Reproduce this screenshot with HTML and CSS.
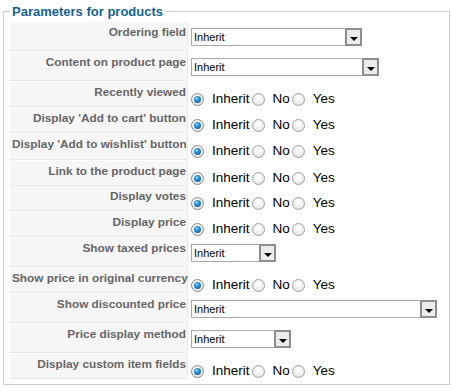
FILE: index.html
```html
<!DOCTYPE html>
<html>
  <head>
    <title>Parameters for products</title>
    <link rel="stylesheet" href="styles.css">
  </head>
  <body>
    <fieldset class="params">
      <legend>Parameters for products</legend>

      <div class="row row-select">
        <div class="key">Ordering field</div>
        <div class="val">
          <div class="select sel-ordering"><span class="select-text">Inherit</span><span class="select-btn"><span class="arrow"></span></span></div>
        </div>
      </div>

      <div class="row row-select">
        <div class="key">Content on product page</div>
        <div class="val">
          <div class="select sel-content"><span class="select-text">Inherit</span><span class="select-btn"><span class="arrow"></span></span></div>
        </div>
      </div>

      <div class="row row-radio">
        <div class="key">Recently viewed</div>
        <div class="val">
          <span class="radio on"></span><span class="opt">Inherit</span>
          <span class="radio"></span><span class="opt">No</span>
          <span class="radio"></span><span class="opt">Yes</span>
        </div>
      </div>

      <div class="row row-radio">
        <div class="key">Display 'Add to cart' button</div>
        <div class="val">
          <span class="radio on"></span><span class="opt">Inherit</span>
          <span class="radio"></span><span class="opt">No</span>
          <span class="radio"></span><span class="opt">Yes</span>
        </div>
      </div>

      <div class="row row-radio row-tall">
        <div class="key">Display 'Add to wishlist' button</div>
        <div class="val">
          <span class="radio on"></span><span class="opt">Inherit</span>
          <span class="radio"></span><span class="opt">No</span>
          <span class="radio"></span><span class="opt">Yes</span>
        </div>
      </div>

      <div class="row row-radio row-short">
        <div class="key">Link to the product page</div>
        <div class="val">
          <span class="radio on"></span><span class="opt">Inherit</span>
          <span class="radio"></span><span class="opt">No</span>
          <span class="radio"></span><span class="opt">Yes</span>
        </div>
      </div>

      <div class="row row-radio">
        <div class="key">Display votes</div>
        <div class="val">
          <span class="radio on"></span><span class="opt">Inherit</span>
          <span class="radio"></span><span class="opt">No</span>
          <span class="radio"></span><span class="opt">Yes</span>
        </div>
      </div>

      <div class="row row-radio">
        <div class="key">Display price</div>
        <div class="val">
          <span class="radio on"></span><span class="opt">Inherit</span>
          <span class="radio"></span><span class="opt">No</span>
          <span class="radio"></span><span class="opt">Yes</span>
        </div>
      </div>

      <div class="row row-select">
        <div class="key">Show taxed prices</div>
        <div class="val">
          <div class="select sel-taxed"><span class="select-text">Inherit</span><span class="select-btn"><span class="arrow"></span></span></div>
        </div>
      </div>

      <div class="row row-radio">
        <div class="key">Show price in original currency</div>
        <div class="val">
          <span class="radio on"></span><span class="opt">Inherit</span>
          <span class="radio"></span><span class="opt">No</span>
          <span class="radio"></span><span class="opt">Yes</span>
        </div>
      </div>

      <div class="row row-select">
        <div class="key">Show discounted price</div>
        <div class="val">
          <div class="select sel-discount"><span class="select-text">Inherit</span><span class="select-btn"><span class="arrow"></span></span></div>
        </div>
      </div>

      <div class="row row-select">
        <div class="key">Price display method</div>
        <div class="val">
          <div class="select sel-method"><span class="select-text">Inherit</span><span class="select-btn"><span class="arrow"></span></span></div>
        </div>
      </div>

      <div class="row row-radio">
        <div class="key">Display custom item fields</div>
        <div class="val">
          <span class="radio on"></span><span class="opt">Inherit</span>
          <span class="radio"></span><span class="opt">No</span>
          <span class="radio"></span><span class="opt">Yes</span>
        </div>
      </div>
    </fieldset>
  </body>
</html>
```

FILE: styles.css
```css
body {
  margin: 0;
  padding-top: 4px;
  background: #fff;
  font-family: "Liberation Sans", Arial, sans-serif;
}

.params {
  margin: 0 2px 0 3px;
  padding: 3px 6px 4px 6px;
  border: 1px solid #cccccc;
}

.params legend {
  padding: 0 2px;
  font-size: 13px;
  line-height: 15px;
  font-weight: bold;
  color: #146295;
}

.row {
  display: grid;
  grid-template-columns: 178px 1fr;
  column-gap: 2px;
  margin-bottom: 1px;
}

.row-select {
  height: 29px;
}

.row-radio {
  height: 25px;
}

.row-tall {
  height: 26px;
}

.row-short {
  height: 24px;
}

.key {
  box-sizing: border-box;
  padding: 3px 1px 0 2px;
  background: #f6f6f6;
  border-bottom: 1px solid #e9e9e9;
  border-right: 1px solid #e9e9e9;
  text-align: right;
  font-size: 11.8px;
  line-height: 14px;
  font-weight: bold;
  color: #666666;
  white-space: nowrap;
}

.val {
  display: flex;
  align-items: center;
  align-self: start;
  padding-left: 1px;
}

.row-select .val {
  padding-top: 6px;
}

.row-radio .val {
  padding-top: 9px;
}

/* fake select boxes */
.select {
  box-sizing: border-box;
  display: flex;
  align-items: center;
  height: 18px;
  border: 1px solid #a9a9a9;
  background: #fff;
}

.select-text {
  padding-left: 2px;
  font-size: 11px;
  color: #000;
}

.select-btn {
  box-sizing: border-box;
  display: flex;
  align-items: center;
  justify-content: center;
  width: 17px;
  height: 18px;
  margin: -1px -1px -1px auto;
  border: 2px solid #8e8e8e;
  background: #ececec;
}

.arrow {
  width: 0;
  height: 0;
  margin-top: 3px;
  border-left: 4px solid transparent;
  border-right: 4px solid transparent;
  border-top: 4px solid #000;
}

.sel-ordering { width: 171px; }
.sel-content { width: 188px; }
.sel-taxed { width: 85px; }
.sel-discount { width: 246px; }
.sel-method { width: 100px; }

/* radios */
.radio {
  position: relative;
  box-sizing: border-box;
  flex: none;
  width: 13px;
  height: 13px;
  border: 1px solid #a4a4a4;
  border-radius: 50%;
  background: radial-gradient(circle at 50% 40%, #ffffff 0, #f0f0f0 50%, #d6d6d6 100%);
}

.radio.on {
  border-color: #8a8a8a;
}

.radio.on::after {
  content: "";
  position: absolute;
  left: 2px;
  top: 2px;
  width: 7px;
  height: 7px;
  border-radius: 50%;
  background: radial-gradient(circle at 40% 35%, #a6ddff 0, #2a8fd6 35%, #0a4e8c 100%);
}

.opt {
  margin: 0 2px 0 8px;
  font-size: 13.5px;
  line-height: 16px;
  color: #000;
}
```
